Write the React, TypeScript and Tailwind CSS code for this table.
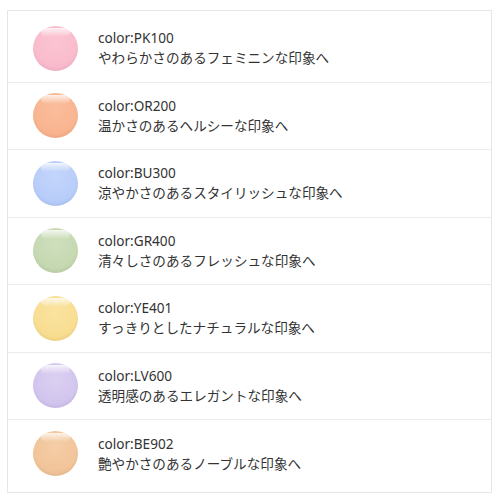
import React from "react";

const items = [
  { code: "color:PK100", text: "やわらかさのあるフェミニンな印象へ", cls: "bg-[radial-gradient(circle_at_50%_35%,#fbc4d3_0%,#f9bccd_60%,#f5b0c4_100%)]" },
  { code: "color:OR200", text: "温かさのあるヘルシーな印象へ", cls: "bg-[radial-gradient(circle_at_50%_35%,#fabd9c_0%,#f9b590_60%,#f4aa82_100%)]" },
  { code: "color:BU300", text: "涼やかさのあるスタイリッシュな印象へ", cls: "bg-[radial-gradient(circle_at_50%_35%,#c2d5fb_0%,#b8cdf9_60%,#abc3f5_100%)]" },
  { code: "color:GR400", text: "清々しさのあるフレッシュな印象へ", cls: "bg-[radial-gradient(circle_at_50%_35%,#cfdfbd_0%,#c6d9b2_60%,#b9cfa4_100%)]" },
  { code: "color:YE401", text: "すっきりとしたナチュラルな印象へ", cls: "bg-[radial-gradient(circle_at_50%_35%,#fae3a0_0%,#f8de92_60%,#f2d483_100%)]" },
  { code: "color:LV600", text: "透明感のあるエレガントな印象へ", cls: "bg-[radial-gradient(circle_at_50%_35%,#dbcff1_0%,#d3c6ee_60%,#c7b8e9_100%)]" },
  { code: "color:BE902", text: "艶やかさのあるノーブルな印象へ", cls: "bg-[radial-gradient(circle_at_50%_35%,#f5cda6_0%,#f2c59a_60%,#ecb98b_100%)]" },
];

function Ball({ cls }: { cls: string }) {
  return (
    <div className={`relative w-[45px] h-[45px] rounded-full shrink-0 overflow-hidden ${cls} shadow-[inset_0_-2px_3px_rgba(0,0,0,0.04)]`}>
      <div className="absolute left-[8px] top-[2px] w-[29px] h-[9px] rounded-full bg-[linear-gradient(to_bottom,rgba(255,255,255,0.8),rgba(255,255,255,0))]" />
    </div>
  );
}

export default function App() {
  return (
    <div className="w-[500px] h-[500px] bg-white pt-[10px] pl-[7px]" style={{ fontFamily: '"Noto Sans", "Noto Sans CJK JP", sans-serif' }}>
      <div className="w-[485px] border border-[#e6e6e6] py-[4px]">
        {items.map((it, i) => (
          <div
            key={it.code}
            className={`flex items-center h-[67.5px] pl-[25px] gap-[20px] ${i < items.length - 1 ? "border-b border-[#ebebeb]" : ""}`}
          >
            <Ball cls={it.cls} />
            <div className="text-[13.6px] leading-[20px] text-[#333333]">
              <div>{it.code}</div>
              <div>{it.text}</div>
            </div>
          </div>
        ))}
      </div>
    </div>
  );
}
